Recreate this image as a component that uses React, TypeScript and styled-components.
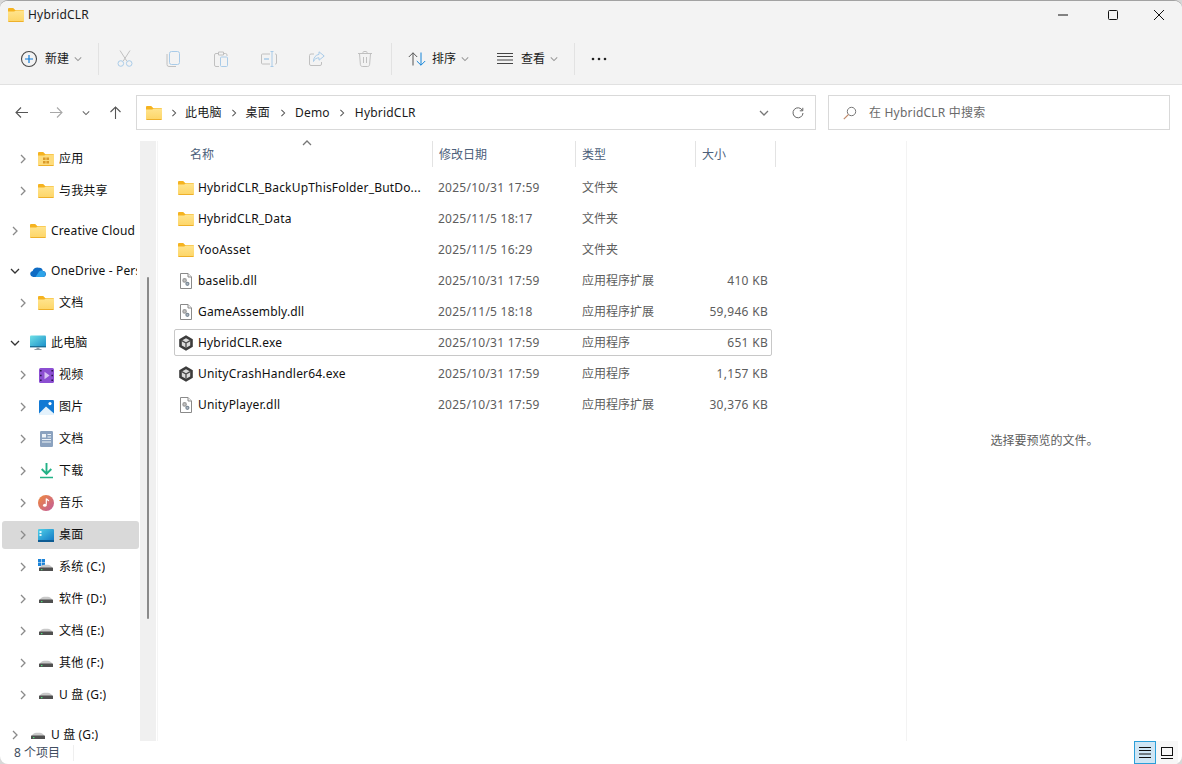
import React from "react";
import styled, { createGlobalStyle } from "styled-components";

const UI = `"Noto Sans", "Noto Sans CJK SC", sans-serif`;

const Global = createGlobalStyle`
  html, body { margin: 0; padding: 0; background: #d8d8d8; }
  * { box-sizing: border-box; }
  #root { width: 1182px; height: 764px; }
`;

const Win = styled.div`
  width: 1182px; height: 764px; display: flex; flex-direction: column; overflow: hidden;
  background: #fff; border-radius: 8px; border-top: 1px solid #a2a2a2;
  font: 12px/16px ${UI}; color: #1a1a1a;
`;
const TitleBar = styled.div`
  height: 31px; flex: none; background: #f3f3f3; display: flex; align-items: center; padding: 0 0 3px 8px;
`;
const TitleText = styled.span`flex: 1; color: #1c1c1c; margin-left: 4px; letter-spacing: .2px;`;
const WinButton = styled.div<{ $mr?: number }>`
  width: 46px; height: 28px; margin-right: ${p => p.$mr ?? 0}px; display: flex; align-items: center; justify-content: center;
`;
const CommandBar = styled.div`
  height: 53px; flex: none; background: #f3f3f3; border-bottom: 1px solid #e1e1e1;
  display: flex; align-items: center; padding: 1px 0 0 10px;
`;
const Sep = styled.div<{ $l: number; $r: number }>`
  width: 1px; height: 32px; background: #e2e2e2; margin: 0 ${p => p.$r}px 0 ${p => p.$l}px; flex: none;
`;
const NewBtn = styled.div`
  width: 84px; display: flex; align-items: center; padding-left: 9px; gap: 6px; flex: none;
`;
const IconBtn = styled.div`
  width: 48px; display: flex; justify-content: center; align-items: center; flex: none;
`;
const TextBtn = styled.div<{ $w: number; $pl: number; $gap: number }>`
  width: ${p => p.$w}px; padding-left: ${p => p.$pl}px; display: flex; align-items: center; gap: ${p => p.$gap}px; flex: none;
`;
const Caret = styled.span<{ $ml: number }>`display: flex; margin-left: ${p => p.$ml}px;`;
const AddressRow = styled.div`
  height: 56px; flex: none; display: flex; align-items: center; padding: 0 12px 1px 0;
`;
const NavBtn = styled.div<{ $w: number }>`
  width: ${p => p.$w}px; display: flex; justify-content: center; flex: none;
`;
const NavGroup = styled.div`width: 136px; padding-left: 4px; display: flex; align-items: center; flex: none;`;
const AddrBox = styled.div`
  width: 680px; height: 35px; border: 1px solid #d9d9d9; background: #fff; display: flex; align-items: center;
  padding: 0 8px 0 9px; flex: none;
`;
const Crumb = styled.span`color: #1a1a1a; letter-spacing: .2px;`;
const CrumbSep = styled.span<{ $w: number }>`
  width: ${p => p.$w}px; display: flex; justify-content: center; flex: none;
`;
const Spacer = styled.div`flex: 1;`;
const RefreshBtn = styled.div`margin-left: 23px; margin-right: 3px; display: flex;`;
const SearchBox = styled.div`
  width: 342px; height: 35px; margin-left: 12px; border: 1px solid #d9d9d9; display: flex; align-items: center;
  padding-left: 14px; gap: 12px; color: #6a6a6a; flex: none; letter-spacing: .2px;
`;
const Body = styled.div`flex: 1; display: flex; min-height: 0;`;
const Sidebar = styled.nav`
  width: 140px; flex: none; overflow: hidden; padding: 4px 0 0 2px;
`;
const NavSection = styled.div`margin-bottom: 12px;`;
const NavRow = styled.div<{ $depth: number; $active?: boolean }>`
  width: 137px; height: 28px; margin: 0 0 4px; display: flex; align-items: center; white-space: nowrap; overflow: hidden;
  border-radius: 3px; padding-left: ${p => (p.$depth ? 15 : 7)}px; background: ${p => (p.$active ? "#d9d9d9" : "transparent")};
  color: #111; letter-spacing: .15px;
`;
const NavChevron = styled.span`width: 12px; display: flex; justify-content: center; flex: none;`;
const NavIcon = styled.span`
  width: 16px; height: 16px; margin: 0 5px 0 9px; display: flex; align-items: center; justify-content: center; flex: none;
`;
const NavLabel = styled.span`overflow: hidden; flex: none; max-width: 86px;`;
const Track = styled.div`
  width: 16px; flex: none; background: #f0f0f0; padding: 136px 0 0 7px; margin-right: 1px;
`;
const Thumb = styled.div`width: 2px; height: 342px; background: #8a8a8a; border-radius: 1px;`;
const Main = styled.div`
  flex: 1; min-width: 0; padding: 0 0 0 16px; border-left: 1px solid #f5f5f5;
`;
const Grid = styled.div`display: grid; grid-template-columns: 258px 143px 120px 80px; width: 601px;`;
const Header = styled(Grid)`height: 26px; margin-bottom: 7px; position: relative;`;
const HeaderCell = styled.div<{ $first?: boolean }>`
  display: flex; align-items: center; color: #4c607a; padding-top: 2px;
  padding-left: ${p => (p.$first ? 16 : 6)}px;
  border-left: ${p => (p.$first ? "none" : "1px solid #e3e3e3")};
`;
const HeaderEnd = styled.div`position: absolute; left: 601px; top: 0; width: 1px; height: 26px; background: #e3e3e3;`;
const SortCaret = styled.span`position: absolute; left: 128px; top: -3px; display: flex;`;
const Row = styled(Grid)<{ $sel?: boolean }>`
  height: 27px; margin-bottom: 4px; align-items: center; width: 598px;
  border: 1px solid ${p => (p.$sel ? "#c8c8c8" : "transparent")};
  border-radius: 2px;
  grid-template-columns: 257px 144px 119px 73px;
`;
const NameCell = styled.div`display: flex; align-items: center; gap: 4px; padding-left: 3px; min-width: 0; white-space: nowrap; color: #111; letter-spacing: .18px;`;
const FileIcon = styled.span`width: 16px; height: 16px; display: flex; align-items: center; justify-content: center; flex: none;`;
const Cell = styled.div`padding-left: 6px; color: #5d5d5d; white-space: nowrap;`;
const DateCell = styled(Cell)`letter-spacing: .25px;`;
const SizeCell = styled.div`text-align: right; color: #5d5d5d; white-space: nowrap; letter-spacing: .3px;`;
const Preview = styled.aside`
  width: 276px; flex: none; border-left: 1px solid #f3f3f3; display: flex; align-items: center; justify-content: center;
  color: #5d5d5d;
`;
const Status = styled.div`
  height: 23px; flex: none; display: flex; align-items: center; padding-left: 14px; color: #3f4d60;
`;
const StatusDivider = styled.div`width: 1px; height: 16px; background: #efefef; margin-left: 13px;`;
const ViewBtn = styled.div<{ $on?: boolean }>`
  width: 22px; height: 23px; display: flex; align-items: center; justify-content: center; flex: none;
  background: ${p => (p.$on ? "#cfe6f5" : "#f7f7f7")};
  border: 1px solid ${p => (p.$on ? "#2b9fd9" : "transparent")};
`;
const StatusRight = styled.div`margin-left: auto; margin-right: 4px; display: flex;`;

let uid = 0;
const Folder = ({ w = 16, h = 14 }: { w?: number; h?: number }) => {
  const id = React.useMemo(() => `f${uid++}`, []);
  return (
    <svg width={w} height={h} viewBox="0 0 16 14">
      <defs>
        <linearGradient id={id} x1="0" y1="0" x2="0" y2="1">
          <stop offset="0" stopColor="#ffe48e" />
          <stop offset="1" stopColor="#fdd566" />
        </linearGradient>
      </defs>
      <path d="M0 1.2C0 .5.5 0 1.2 0h4l2 2h7.6c.7 0 1.2.5 1.2 1.2V5H0Z" fill="#f5b320" />
      <path d="M0 3.6h6.2L7.8 2.6H16v10.2c0 .7-.5 1.2-1.2 1.2H1.2C.5 14 0 13.5 0 12.8Z" fill={`url(#${id})`} />
      <path d="M0 13h16v-.2c0 .7-.5 1.2-1.2 1.2H1.2C.5 14 0 13.5 0 12.8Z" fill="#eeb02a" />
    </svg>
  );
};
const AppsFolder = () => (
  <svg width="16" height="14" viewBox="0 0 16 14">
    <path d="M0 1.2C0 .5.5 0 1.2 0h4l2 2h7.6c.7 0 1.2.5 1.2 1.2V5H0Z" fill="#f5b320" />
    <path d="M0 3.6h6.2L7.8 2.6H16v10.2c0 .7-.5 1.2-1.2 1.2H1.2C.5 14 0 13.5 0 12.8Z" fill="#fedc7c" />
    <path d="M5 5.5h2.6v2.6H5zM8.4 5.5H11v2.6H8.4zM5 9h2.6v2.6H5zM8.4 9H11v2.6H8.4z" fill="#d99a2b" />
    <path d="M0 13h16v-.2c0 .7-.5 1.2-1.2 1.2H1.2C.5 14 0 13.5 0 12.8Z" fill="#eeb02a" />
  </svg>
);
const Cloud = () => (
  <svg width="16" height="11" viewBox="0 0 16 11">
    <path d="M3.2 11a3.1 3.1 0 0 1-.6-6.100A4.800 4.800 0 0 1 8.600 1.800a3.800 3.800 0 0 1 4.200 3.200A3 3 0 0 1 13 11Z" fill="#0f6cc4" />
    <path d="M5.500 11l3.600-5.400a3.200 3.200 0 0 1 4.200-.4A3 3 0 0 1 13 11Z" fill="#2ea3e8" />
  </svg>
);
const Monitor = () => (
  <svg width="16" height="16" viewBox="0 0 16 16">
    <defs>
      <linearGradient id="mon" x1="0" y1="0" x2="1" y2="1">
        <stop offset="0" stopColor="#6fe0e6" />
        <stop offset="1" stopColor="#1a8fc9" />
      </linearGradient>
    </defs>
    <rect x="0" y="0.5" width="16" height="11.5" rx="1" fill="url(#mon)" />
    <rect x="0" y="11" width="16" height="1.4" fill="#1a6f96" />
    <path d="M6.5 12.4h3V14h-3zM4.5 14h7v1h-7z" fill="#8d9aa3" />
  </svg>
);
const Video = () => (
  <svg width="15" height="15" viewBox="0 0 15 15">
    <rect width="15" height="15" rx="1.5" fill="#8c4fd2" />
    <path d="M1 2h1.6v1.6H1zM1 6.7h1.6v1.6H1zM1 11.4h1.6V13H1zM12.4 2H14v1.6h-1.6zM12.4 6.7H14v1.6h-1.6zM12.4 11.4H14V13h-1.6z" fill="#2c1450" />
    <path d="M5.5 3.8 10.6 7.5 5.5 11.2Z" fill="#d8c2f4" />
  </svg>
);
const Picture = () => (
  <svg width="15" height="15" viewBox="0 0 15 15">
    <rect width="15" height="15" rx="1.2" fill="#1179d4" />
    <path d="M0 13.6 7 6.5 15 13.6V15H0Z" fill="#e4f2fc" />
    <circle cx="11" cy="3.6" r="1.6" fill="#fff" />
  </svg>
);
const Doc = () => (
  <svg width="13" height="16" viewBox="0 0 13 16">
    <rect width="13" height="16" rx="1.2" fill="#8ba2bf" />
    <path d="M2 3h4v3.5H2zM7.5 3H11v1H7.5zM7.5 5.4H11v1H7.5zM2 8h9v1H2zM2 10.4h9v1H2z" fill="#eef3f8" />
  </svg>
);
const Download = () => (
  <svg width="13" height="16" viewBox="0 0 13 16">
    <path d="M6.5 0v10M1.7 6l4.8 4.8L11.3 6" fill="none" stroke="#22b286" strokeWidth="1.9" />
    <path d="M0 14.5h13" stroke="#22b286" strokeWidth="1.6" />
  </svg>
);
const Music = () => (
  <svg width="16" height="16" viewBox="0 0 16 16">
    <defs>
      <linearGradient id="mus" x1="0" y1="0" x2="1" y2="1">
        <stop offset="0" stopColor="#f08a3c" />
        <stop offset="1" stopColor="#c15a9c" />
      </linearGradient>
    </defs>
    <circle cx="8" cy="8" r="8" fill="url(#mus)" />
    <path d="M8.3 3.5v6.2M8.3 3.5c.6 1.2 2 1.4 2.4 2.6" stroke="#fff" strokeWidth="1.2" fill="none" />
    <ellipse cx="6.8" cy="10.2" rx="1.8" ry="1.5" fill="#fff" />
  </svg>
);
const Desktop = () => (
  <svg width="16" height="13" viewBox="0 0 16 13">
    <defs>
      <linearGradient id="dsk" x1="0" y1="0" x2="1" y2="1">
        <stop offset="0" stopColor="#4fd0e8" />
        <stop offset="1" stopColor="#1277c4" />
      </linearGradient>
    </defs>
    <rect width="16" height="12" rx="1" fill="url(#dsk)" />
    <rect x="1.5" y="2" width="2" height="2" fill="#dff6fb" />
    <rect x="1.5" y="5" width="2" height="2" fill="#dff6fb" />
    <rect y="11" width="16" height="2" fill="#0e5c93" />
  </svg>
);
const Drive = ({ win }: { win?: boolean }) => (
  <svg width="16" height="16" viewBox="0 0 16 16">
    {win && <path d="M0 0h3.2v3.2H0zM3.8 0H7v3.2H3.8zM0 3.8h3.2V7H0zM3.8 3.8H7V7H3.8z" fill="#1b83d8" />}
    <path d="M1.500 9C3 6.200 5 5.800 8 5.800S13 6.200 14.500 9Z" fill="#c9c9c9" />
    <rect x="1" y="8.400" width="14" height="3.600" rx=".6" fill="#505050" />
    <rect x="3" y="10" width="1.400" height="1.200" fill="#4ee07a" />
  </svg>
);
const Dll = () => (
  <svg width="12" height="16" viewBox="0 0 12 16">
    <path d="M.5.5h7.500l3.500 3.500v11.500H.5Z" fill="#fff" stroke="#8a8a8a" />
    <path d="M8 .5V4h3.500" fill="#f0f0f0" stroke="#8a8a8a" />
    <circle cx="4.600" cy="7.400" r="1.700" fill="#c4c4c4" stroke="#9a9a9a" strokeWidth="1.200" />
    <circle cx="7.400" cy="10.800" r="1.500" fill="#b4bec8" stroke="#7c8a96" strokeWidth="1.200" />
  </svg>
);
const UnityExe = () => (
  <svg width="16" height="16" viewBox="0 0 16 16">
    <path d="M8 .3 14.800 4.200v7.600L8 15.700 1.200 11.800V4.200Z" fill="#3c3c3c" />
    <path d="M8 3.200 12.200 5.600v4.800L8 12.800 3.800 10.400V5.600Z" fill="#dcdcdc" />
    <path d="M8 8v4.800M8 8 3.800 5.600M8 8l4.200-2.400" stroke="#4a4a4a" strokeWidth="1.300" />
  </svg>
);

const Chev = ({ dir = "right", color = "#8a8a8a", size = 10 }: { dir?: "right" | "down" | "up"; color?: string; size?: number }) => {
  const d = dir === "right" ? "M3 1l4 4-4 4" : dir === "down" ? "M1 3l4 4 4-4" : "M1 7l4-4 4 4";
  return (
    <svg width={size} height={size} viewBox="0 0 10 10">
      <path d={d} fill="none" stroke={color} strokeWidth="1.300" />
    </svg>
  );
};

const BLUE = "#a9cbe8";
const GR = "#c0c0c0";
const Cut = () => (
  <svg width="16" height="17" viewBox="0 0 16 17" fill="none">
    <path d="M3 .5l6.800 10.600M13 .5 6.200 11.100" stroke={GR} />
    <circle cx="3.800" cy="13.500" r="2.800" stroke={BLUE} />
    <circle cx="12.200" cy="13.500" r="2.800" stroke={BLUE} />
  </svg>
);
const Copy = () => (
  <svg width="14" height="16" viewBox="0 0 14 16" fill="none">
    <path d="M1 3v10.500A2 2 0 0 0 3 15.500h7" stroke={GR} />
    <rect x="3.500" y=".5" width="10" height="13" rx="2" stroke={BLUE} />
  </svg>
);
const Paste = () => (
  <svg width="14" height="16" viewBox="0 0 14 16" fill="none">
    <path d="M4 2.500H2A1.500 1.500 0 0 0 .5 4v10A1.500 1.500 0 0 0 2 15.500h3M10 2.500h1.500A1.500 1.500 0 0 1 13 4v1M4.500 1h5v3h-5Z" stroke={GR} />
    <rect x="6.500" y="6" width="7" height="9.500" rx="1" stroke={BLUE} />
  </svg>
);
const Rename = () => (
  <svg width="16" height="16" viewBox="0 0 16 16" fill="none">
    <path d="M9 3H1.500A1 1 0 0 0 .5 4v8a1 1 0 0 0 1 1H9M14 3h.5a1 1 0 0 1 1 1v8a1 1 0 0 1-1 1H14" stroke={GR} />
    <path d="M3 8h5" stroke={BLUE} strokeWidth="1.400" />
    <path d="M9.500.5h3M11 .5v15M9.500 15.500h3" stroke={BLUE} />
  </svg>
);
const Share = () => (
  <svg width="16" height="15" viewBox="0 0 16 15" fill="none">
    <path d="M5 3H2A1.500 1.500 0 0 0 .5 4.500V13A1.500 1.500 0 0 0 2 14.500h9A1.500 1.500 0 0 0 12.500 13v-2" stroke={GR} />
    <path d="M10 .8 15.200 5 10 9.200V6.800C7.500 6.800 5.500 8 4.500 10.500 4.500 6.500 6.800 3.800 10 3.400Z" stroke={BLUE} />
  </svg>
);
const Trash = () => (
  <svg width="14" height="16" viewBox="0 0 14 16" fill="none" stroke={GR}>
    <path d="M0 2.500h14M5 2.500V1.300C5 .8 5.400.5 5.800.5h2.400c.4 0 .8.300.8.800v1.200M1.500 2.500l.9 11.200c.1 1 .9 1.800 1.900 1.800h5.400c1 0 1.800-.8 1.900-1.800l.9-11.200M5.500 6v6M8.500 6v6" />
  </svg>
);
const Plus = () => (
  <svg width="20" height="20" viewBox="0 0 20 20" fill="none">
    <circle cx="10" cy="10" r="7.500" stroke="#4a4a4a" strokeWidth="1.100" />
    <path d="M10 6v8M6 10h8" stroke="#0f7bd7" strokeWidth="1.200" />
  </svg>
);
const Sort = () => (
  <svg width="18" height="14" viewBox="0 0 18 14" fill="none">
    <path d="M5 13.500V.8M.8 5 5 .8 9.200 5" stroke="#555" />
    <path d="M13 .5v12.700M8.800 9 13 13.200 17.200 9" stroke="#1484d8" />
  </svg>
);
const Lines = ({ c = "#444", w = 16 }: { c?: string; w?: number }) => (
  <svg width={w} height="11" viewBox={`0 0 ${w} 11`}>
    <path d={`M0 .5h${w}M0 3.500h${w}M0 7h${w}M0 10.500h${w}`} stroke={c} />
  </svg>
);
const More = () => (
  <svg width="16" height="4" viewBox="0 0 16 4">
    <circle cx="2" cy="2" r="1.300" fill="#222" />
    <circle cx="8" cy="2" r="1.300" fill="#222" />
    <circle cx="14" cy="2" r="1.300" fill="#222" />
  </svg>
);
const Arrow = ({ dir, c }: { dir: "left" | "right" | "up"; c: string }) => {
  const d = dir === "left" ? "M13 6.500H1M6 1.500l-5 5 5 5" : dir === "right" ? "M0 6.500h12M7 1.500l5 5-5 5" : "M6.500 13V1M1.500 6l5-5 5 5";
  return (
    <svg width="13" height="13" viewBox="0 0 13 13" fill="none">
      <path d={d} stroke={c} strokeWidth="1.100" />
    </svg>
  );
};
const Refresh = () => (
  <svg width="12" height="12" viewBox="0 0 12 12" fill="none" stroke="#666">
    <path d="M10.400 3.400A5 5 0 1 0 11 6" />
    <path d="M10.800 .8v3H7.800" />
  </svg>
);
const Search = () => (
  <svg width="14" height="14" viewBox="0 0 14 14" fill="none">
    <circle cx="8.500" cy="5.500" r="4.200" stroke="#777" />
    <path d="M5.500 8.500.8 13.200" stroke="#c08a6a" strokeWidth="1.100" />
  </svg>
);

type Nav = { label: string; depth: number; icon: React.ReactNode; open?: boolean; active?: boolean };
const sections: Nav[][] = [
  [
    { label: "应用", depth: 1, icon: <AppsFolder /> },
    { label: "与我共享", depth: 1, icon: <Folder /> },
  ],
  [{ label: "Creative Cloud", depth: 0, icon: <Folder /> }],
  [
    { label: "OneDrive - Personal", depth: 0, icon: <Cloud />, open: true },
    { label: "文档", depth: 1, icon: <Folder /> },
  ],
  [
    { label: "此电脑", depth: 0, icon: <Monitor />, open: true },
    { label: "视频", depth: 1, icon: <Video /> },
    { label: "图片", depth: 1, icon: <Picture /> },
    { label: "文档", depth: 1, icon: <Doc /> },
    { label: "下载", depth: 1, icon: <Download /> },
    { label: "音乐", depth: 1, icon: <Music /> },
    { label: "桌面", depth: 1, icon: <Desktop />, active: true },
    { label: "系统 (C:)", depth: 1, icon: <Drive win /> },
    { label: "软件 (D:)", depth: 1, icon: <Drive /> },
    { label: "文档 (E:)", depth: 1, icon: <Drive /> },
    { label: "其他 (F:)", depth: 1, icon: <Drive /> },
    { label: "U 盘 (G:)", depth: 1, icon: <Drive /> },
  ],
  [{ label: "U 盘 (G:)", depth: 0, icon: <Drive /> }],
];

type FileRow = { name: string; date: string; type: string; size: string; kind: "folder" | "dll" | "exe"; sel?: boolean };
const files: FileRow[] = [
  { name: "HybridCLR_BackUpThisFolder_ButDo...", date: "2025/10/31 17:59", type: "文件夹", size: "", kind: "folder" },
  { name: "HybridCLR_Data", date: "2025/11/5 18:17", type: "文件夹", size: "", kind: "folder" },
  { name: "YooAsset", date: "2025/11/5 16:29", type: "文件夹", size: "", kind: "folder" },
  { name: "baselib.dll", date: "2025/10/31 17:59", type: "应用程序扩展", size: "410 KB", kind: "dll" },
  { name: "GameAssembly.dll", date: "2025/11/5 18:18", type: "应用程序扩展", size: "59,946 KB", kind: "dll" },
  { name: "HybridCLR.exe", date: "2025/10/31 17:59", type: "应用程序", size: "651 KB", kind: "exe", sel: true },
  { name: "UnityCrashHandler64.exe", date: "2025/10/31 17:59", type: "应用程序", size: "1,157 KB", kind: "exe" },
  { name: "UnityPlayer.dll", date: "2025/10/31 17:59", type: "应用程序扩展", size: "30,376 KB", kind: "dll" },
];

const crumbs: [string, number][] = [["此电脑", 23], ["桌面", 24], ["Demo", 25], ["HybridCLR", 25]];

export default function App() {
  return (
    <Win>
      <Global />
      <TitleBar>
        <Folder />
        <TitleText>HybridCLR</TitleText>
        <WinButton $mr={4}>
          <svg width="10" height="10" viewBox="0 0 10 10"><path d="M0 5h10" stroke="#111" /></svg>
        </WinButton>
        <WinButton>
          <svg width="10" height="10" viewBox="0 0 10 10"><rect x=".5" y=".5" width="9" height="9" rx="1" fill="none" stroke="#111" /></svg>
        </WinButton>
        <WinButton>
          <svg width="10" height="10" viewBox="0 0 10 10"><path d="M0 0l10 10M10 0 0 10" stroke="#111" /></svg>
        </WinButton>
      </TitleBar>
      <CommandBar>
        <NewBtn>
          <Plus />
          <span>新建</span>
          <Caret $ml={-1}><Chev dir="down" size={8} color="#999" /></Caret>
        </NewBtn>
        <Sep $l={4} $r={2} />
        <IconBtn><Cut /></IconBtn>
        <IconBtn><Copy /></IconBtn>
        <IconBtn><Paste /></IconBtn>
        <IconBtn><Rename /></IconBtn>
        <IconBtn><Share /></IconBtn>
        <IconBtn><Trash /></IconBtn>
        <Sep $l={2} $r={4} />
        <TextBtn $w={88} $pl={12} $gap={6}>
          <Sort />
          <span>排序</span>
          <Caret $ml={-1}><Chev dir="down" size={8} color="#999" /></Caret>
        </TextBtn>
        <TextBtn $w={90} $pl={13} $gap={8}>
          <Lines />
          <span>查看</span>
          <Caret $ml={-3}><Chev dir="down" size={8} color="#999" /></Caret>
        </TextBtn>
        <Sep $l={0} $r={16} />
        <More />
      </CommandBar>
      <AddressRow>
        <NavGroup>
          <NavBtn $w={34}><Arrow dir="left" c="#555" /></NavBtn>
          <NavBtn $w={36}><Arrow dir="right" c="#a8a8a8" /></NavBtn>
          <NavBtn $w={24}><Chev dir="down" size={8} color="#666" /></NavBtn>
          <NavBtn $w={34}><Arrow dir="up" c="#555" /></NavBtn>
        </NavGroup>
        <AddrBox>
          <Folder />
          {crumbs.map(([c, w]) => (
            <React.Fragment key={c}>
              <CrumbSep $w={w}><Chev size={8} color="#555" /></CrumbSep>
              <Crumb>{c}</Crumb>
            </React.Fragment>
          ))}
          <Spacer />
          <Chev dir="down" color="#777" />
          <RefreshBtn><Refresh /></RefreshBtn>
        </AddrBox>
        <SearchBox>
          <Search />
          <span>在 HybridCLR 中搜索</span>
        </SearchBox>
      </AddressRow>
      <Body>
        <Sidebar>
          {sections.map((s, i) => (
            <NavSection key={i}>
              {s.map((n, j) => (
                <NavRow key={j} $depth={n.depth} $active={n.active}>
                  <NavChevron>
                    <Chev dir={n.open ? "down" : "right"} color={n.open ? "#333" : "#8a8a8a"} />
                  </NavChevron>
                  <NavIcon>{n.icon}</NavIcon>
                  <NavLabel>{n.label}</NavLabel>
                </NavRow>
              ))}
            </NavSection>
          ))}
        </Sidebar>
        <Track><Thumb /></Track>
        <Main>
          <Header>
            <SortCaret><Chev dir="up" color="#777" /></SortCaret>
            <HeaderCell $first>名称</HeaderCell>
            <HeaderCell>修改日期</HeaderCell>
            <HeaderCell>类型</HeaderCell>
            <HeaderCell>大小</HeaderCell>
            <HeaderEnd />
          </Header>
          {files.map(f => (
            <Row key={f.name} $sel={f.sel}>
              <NameCell>
                <FileIcon>{f.kind === "folder" ? <Folder /> : f.kind === "dll" ? <Dll /> : <UnityExe />}</FileIcon>
                <span>{f.name}</span>
              </NameCell>
              <DateCell>{f.date}</DateCell>
              <Cell>{f.type}</Cell>
              <SizeCell>{f.size}</SizeCell>
            </Row>
          ))}
        </Main>
        <Preview>选择要预览的文件。</Preview>
      </Body>
      <Status>
        <span>8 个项目</span>
        <StatusDivider />
        <StatusRight>
          <ViewBtn $on><Lines c="#111" w={12} /></ViewBtn>
          <ViewBtn>
            <svg width="12" height="12" viewBox="0 0 12 12" fill="none" stroke="#111">
              <rect x=".5" y=".5" width="11" height="8" />
              <path d="M0 11.500h12" />
            </svg>
          </ViewBtn>
        </StatusRight>
      </Status>
    </Win>
  );
}
